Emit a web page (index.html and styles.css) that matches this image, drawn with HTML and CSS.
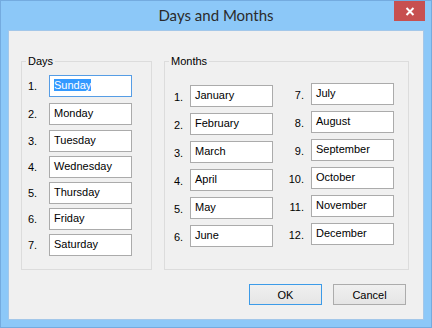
FILE: index.html
```html
<!DOCTYPE html>
<html lang="en">
<head>
<meta charset="UTF-8">
<title>Days and Months</title>
<link rel="stylesheet" href="styles.css">
</head>
<body>
    <div class="window">
        <!-- Title bar -->
        <div class="titlebar">
            <span class="title">Days and Months</span>
            <button class="close" aria-label="Close">
                <svg width="10" height="9" viewBox="0 0 10 9">
                    <path d="M1.5 1 L8.5 8 M8.5 1 L1.5 8" stroke="#fff" stroke-width="2" fill="none"/>
                </svg>
            </button>
        </div>

        <div class="panel">
            <div class="groups">
                <fieldset class="group days">
                    <legend>Days</legend>
                    <div class="day-list">
                        <div class="row"><span class="num">1.</span><div class="box focused"><span class="sel">Sunday</span></div></div>
                        <div class="row"><span class="num">2.</span><div class="box">Monday</div></div>
                        <div class="row"><span class="num">3.</span><div class="box">Tuesday</div></div>
                        <div class="row"><span class="num">4.</span><div class="box">Wednesday</div></div>
                        <div class="row"><span class="num">5.</span><div class="box">Thursday</div></div>
                        <div class="row"><span class="num">6.</span><div class="box">Friday</div></div>
                        <div class="row"><span class="num">7.</span><div class="box">Saturday</div></div>
                    </div>
                </fieldset>

                <fieldset class="group months">
                    <legend>Months</legend>
                    <div class="month-cols">
                        <div class="month-list first">
                            <div class="row"><span class="num">1.</span><div class="box">January</div></div>
                            <div class="row"><span class="num">2.</span><div class="box">February</div></div>
                            <div class="row"><span class="num">3.</span><div class="box">March</div></div>
                            <div class="row"><span class="num">4.</span><div class="box">April</div></div>
                            <div class="row"><span class="num">5.</span><div class="box">May</div></div>
                            <div class="row"><span class="num">6.</span><div class="box">June</div></div>
                        </div>
                        <div class="month-list second">
                            <div class="row"><span class="num">7.</span><div class="box">July</div></div>
                            <div class="row"><span class="num">8.</span><div class="box">August</div></div>
                            <div class="row"><span class="num">9.</span><div class="box">September</div></div>
                            <div class="row"><span class="num">10.</span><div class="box">October</div></div>
                            <div class="row"><span class="num">11.</span><div class="box">November</div></div>
                            <div class="row"><span class="num">12.</span><div class="box">December</div></div>
                        </div>
                    </div>
                </fieldset>
            </div>

            <div class="buttons">
                <button class="btn default">OK</button>
                <button class="btn">Cancel</button>
            </div>
        </div>
    </div>
</body>
</html>
```

FILE: styles.css
```css
* {
    box-sizing: border-box;
}

body {
    margin: 0;
    font-family: "Liberation Sans", Arial, sans-serif;
    font-size: 11px;
    color: #000;
}

.window {
    position: relative;
    width: 432px;
    height: 328px;
    background: #8cc8f8;
    border: 1px solid #74abdf;
    padding: 0 7px 7px;
}

.titlebar {
    height: 29px;
    text-align: center;
    font-family: Lato, "Open Sans", sans-serif;
    font-size: 15px;
    line-height: 28px;
    color: #2b2b2b;
}

/* close button sits over the title bar */
.close {
    position: absolute;
    top: 0;
    right: 6px;
    width: 31px;
    height: 20px;
    border: none;
    padding: 0;
    background: #c75050;
    display: flex;
    align-items: center;
    justify-content: center;
}

.panel {
    height: 290px;
    background: #f0f0f0;
    border: 1px solid #a3c7e9;
    padding: 23px 0 0 12px;
}

.groups {
    display: flex;
    gap: 12px;
}

.group {
    margin: 0;
    padding: 0;
    min-width: 0;
    height: 216px;
    border: 1px solid #dcdcdc;
}

.days {
    width: 131px;
}

.months {
    width: 245px;
}

legend {
    margin-left: 4px;
    padding: 0 2px;
    line-height: 14px;
}

.row {
    display: flex;
    height: 22px;
}

.num {
    line-height: 22px;
}

.box {
    width: 83px;
    height: 22px;
    background: #fff;
    border: 1px solid #ababab;
    padding: 1px 0 0 4px;
    line-height: 16px;
    white-space: nowrap;
}

.box.focused {
    border-color: #569de5;
}

.sel {
    background: #3399ff;
    color: #fff;
}

.day-list {
    display: flex;
    flex-direction: column;
    gap: 4px;
    padding: 7px 0 0 6px;
}

.day-list .num {
    width: 21px;
}

.day-list .row:nth-child(1) {
    margin-bottom: 2px;
}

.day-list .row:nth-child(2) {
    margin-bottom: 1px;
}

.month-cols {
    display: flex;
    padding: 15px 0 0 9px;
}

.month-list {
    display: flex;
    flex-direction: column;
    gap: 6px;
}

.month-list.first {
    margin-top: 2px;
}

.month-list .num {
    line-height: 24px;
}

.month-list.first .num {
    width: 16px;
}

.month-list.second .num {
    width: 38px;
    text-align: right;
    padding-right: 7px;
}

.buttons {
    display: flex;
    justify-content: flex-end;
    gap: 11px;
    margin-top: 14px;
    padding-right: 17px;
}

.btn {
    width: 73px;
    height: 21px;
    padding: 0;
    font: inherit;
    color: #000;
    background: linear-gradient(#f0f0f0, #e5e5e5);
    border: 1px solid #acacac;
    border-radius: 0;
}

.btn.default {
    border-color: #3c9be8;
}
```
